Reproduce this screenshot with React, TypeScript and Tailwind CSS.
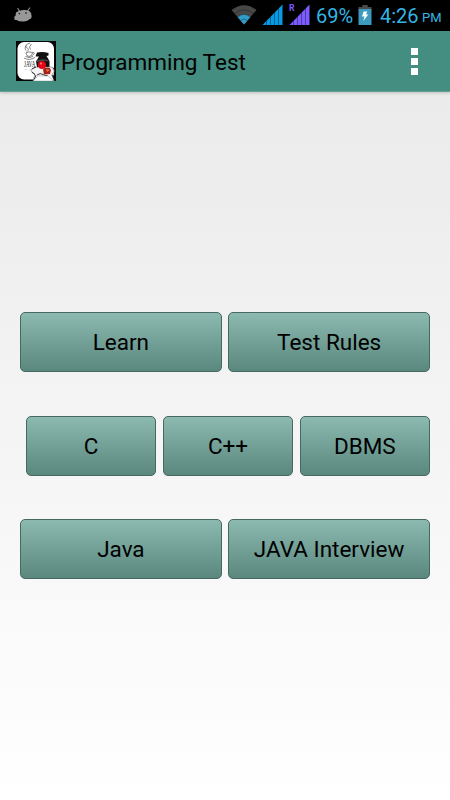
const rows = [
  { className: 'pl-5', labels: ['Learn', 'Test Rules'] },
  { className: 'pl-[26px]', labels: ['C', 'C++', 'DBMS'] },
  { className: 'pl-5', labels: ['Java', 'JAVA Interview'] },
];

function AndroidHead() {
  return (
    <svg width="20" height="16" viewBox="0 0 20 16">
      <path d="M4.8 1.5L6.5 4M16.7 1L14.5 4" stroke="#8b8b8b" strokeWidth="1.2" strokeLinecap="round" />
      <path d="M3 5.5Q6 2.8 11 3Q16.5 2.8 18 6L18.7 9.5Q18.5 12 16.5 12.2Q14 14.8 10 14.6Q5.5 14.5 3.5 13L1.8 13Q0.5 9.5 2.5 8.8Z" fill="#989898" />
      <circle cx="6.4" cy="6.6" r="0.9" fill="#333" />
      <circle cx="13" cy="6" r="0.9" fill="#333" />
    </svg>
  );
}

function Wifi() {
  return (
    <svg width="26" height="20" viewBox="0 0 26 20">
      <path d="M0.5 5Q13 -4.5 25.5 5L13 19.5Z" fill="#474747" />
      <path d="M6.5 12Q13 6.5 19.5 12L13 19.5Z" fill="#2f9cc9" />
      <path d="M3.5 8.6Q13 1 22.5 8.6M6.5 12Q13 6.8 19.5 12M9.5 15.5Q13 12.5 16.5 15.5" fill="none" stroke="#111" strokeOpacity="0.6" strokeWidth="0.6" />
    </svg>
  );
}

function Signal({ color, roaming }: { color: string; roaming?: boolean }) {
  return (
    <svg width="21" height="23" viewBox="0 0 21 23">
      <path d="M0.5 22L20.5 1.5V22Z" fill={color} />
      <path d="M4.5 2V23M8.5 2V23M12.5 2V23M16.5 2V23" stroke="#000" strokeOpacity="0.4" strokeWidth="0.9" />
      {roaming && (
        <text x="0" y="7.8" fill={color} fontSize="8.5" fontWeight="700" fontFamily="Roboto, sans-serif">R</text>
      )}
    </svg>
  );
}

function Battery() {
  return (
    <svg width="14" height="20" viewBox="0 0 14 20">
      <path d="M4.3 0H9.7V2H13.5V4.5H0.5V2H4.3Z" fill="#4a4a4a" />
      <path d="M0.5 4H13.5V20H0.5Z" fill="#3b9abd" />
      <path d="M5.5 6.5H9.3L8 9.5H10.3L5.3 16L6.5 11.5H4Z" fill="#fff" />
    </svg>
  );
}

function AppIcon() {
  return (
    <svg width="40" height="40" viewBox="0 0 40 40">
      <rect width="40" height="40" fill="#050505" />
      <rect x="1.5" y="1" width="36.5" height="37.5" rx="6.5" fill="#fff" />
      <g fill="none" stroke="#666" strokeWidth="0.8">
        <path d="M14 2Q8 4 10.5 6.5Q14 8 11 10.5M15.5 3Q12 6 14.5 8.5M10 4.5Q8 7.5 10 9.5" />
        <path d="M10 11.5Q13 10.5 17 11.5M10 12Q10.5 15.5 13 15.5Q16 15.5 16.5 12M16.8 11.5Q20 11.5 16.5 14.5" />
        <path d="M8 17Q13 20 19 16.5M9.5 15.5Q13 17.5 17 15.5" />
      </g>
      <text transform="translate(8 26) scale(0.55 1)" fontSize="9" fill="#111" fontFamily="Liberation Serif, serif">JAVA</text>
      <path d="M9 28.5H11M13 29H15M16.5 28.5H18" stroke="#ddd" strokeWidth="1" />
      <path d="M21 11.5Q27 10.5 32.5 12V14.5L30.5 15L33.5 20V26H21L20 20.5L23 15.5L19.5 15.5Z" fill="#111" />
      <path d="M20.5 19.5Q26 17 32.5 19.5L33 20.5Q27 19 20 21.5Z" fill="#444" />
      <path d="M15.5 28Q18 25.5 22 26L32 26Q37 25 38 29Q39 32 36 33L38 40H17L19 33Q14 32 15.5 28Z" fill="#f4f4f4" stroke="#555" strokeWidth="0.5" />
      <path d="M16 28L20 26M19 33.5L16 31M37 26.5L38.5 29M18 39L20 34M36 34L38 38M21 34Q24 31 28 34L32 35" fill="none" stroke="#222" strokeWidth="0.9" />
      <path d="M18 39L22 35H32L36.5 39V40H18Z" fill="#fff" stroke="#999" strokeWidth="0.5" />
      <circle cx="26" cy="24" r="4" fill="#e30613" />
      <circle cx="25" cy="22.6" r="1.1" fill="#ff7373" />
      <path d="M27 28.5L29 26.8H33.5L35 29L34 33L28 33.5Z" fill="#a91e16" />
      <path d="M30 28L34 29L31 31Z" fill="#e2783c" />
    </svg>
  );
}

export default function App() {
  return (
    <div className="flex h-[800px] w-[450px] flex-col overflow-hidden bg-linear-to-b from-[#e8e8e8] to-white font-['Roboto',sans-serif] text-black">
      <div className="flex h-[31px] shrink-0 items-start bg-black text-[#35b5e5]">
        <div className="pt-[7px] pl-[13px]">
          <AndroidHead />
        </div>
        <div className="ml-auto flex items-start pr-[8px]">
          <div className="mr-[5px] pt-[5px]"><Wifi /></div>
          <div className="mr-[6px] pt-[3px]"><Signal color="#0799e3" /></div>
          <div className="mr-[6px] pt-[3px]"><Signal color="#7d5cff" roaming /></div>
          <span className="w-[42px] text-[20px] leading-[33px] whitespace-nowrap">69%</span>
          <div className="mr-[8px] pt-[5px]"><Battery /></div>
          <span className="w-[42px] text-[20px] leading-[33px] whitespace-nowrap">4:26</span>
          <span className="w-[20px] text-[13px] leading-[36px] whitespace-nowrap">PM</span>
        </div>
      </div>

      <header className="flex h-[61px] shrink-0 items-center border-b border-[#66a195] bg-[#438e80] pr-[31px] pl-4 shadow-[0_1px_3px_rgba(0,0,0,0.2)]">
        <AppIcon />
        <h1 className="ml-[5px] pt-[3px] text-[22.5px]">Programming Test</h1>
        <button className="ml-auto flex flex-col gap-[3px] p-px" aria-label="More options">
          <span className="size-[7px] bg-white" />
          <span className="size-[7px] bg-white" />
          <span className="size-[7px] bg-white" />
        </button>
      </header>

      <main className="flex flex-col gap-[43.5px] pt-[220px] pr-5">
        {rows.map((row) => (
          <div key={row.labels[0]} className={`flex gap-[6.5px] ${row.className}`}>
            {row.labels.map((label) => (
              <button
                key={label}
                className="h-[60px] min-w-0 flex-1 rounded-[5px] border border-[#46685f] bg-linear-to-b from-[#8cb9b0] to-[#5a877e] pt-[2.5px] text-[22.5px] whitespace-nowrap"
              >
                {label}
              </button>
            ))}
          </div>
        ))}
      </main>
    </div>
  );
}
